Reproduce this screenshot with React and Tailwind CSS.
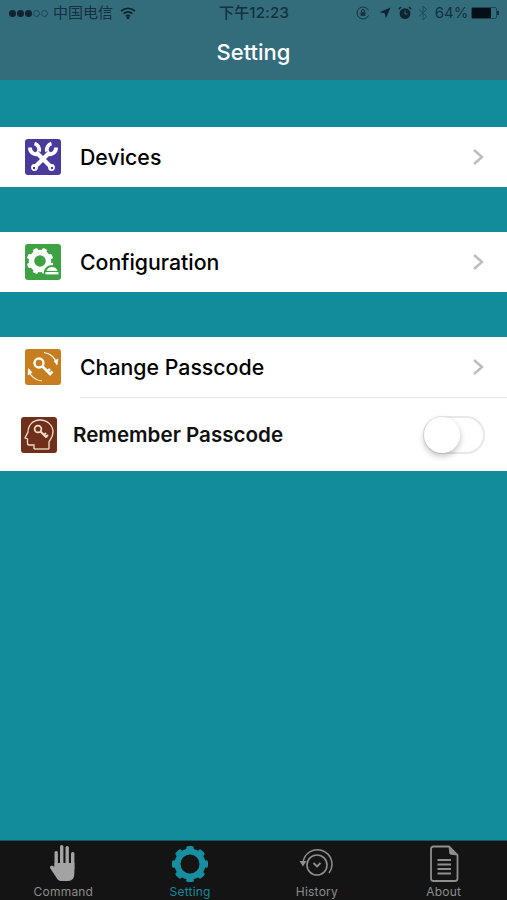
function Gear({ cx, cy, r, sw, toothW, toothL, color, teeth = 8, offset = 22.5 }) {
    const angles = Array.from({ length: teeth }, (_, i) => (i * 360) / teeth + offset)
    return (
        <g>
            <circle cx={cx} cy={cy} r={r} fill="none" stroke={color} strokeWidth={sw} />
            {angles.map((a) => (
                <rect
                    key={a}
                    x={cx - toothW / 2}
                    y={cy - r - sw / 2 - toothL + 0.5}
                    width={toothW}
                    height={toothL + 1}
                    rx={toothW / 4}
                    fill={color}
                    transform={`rotate(${a} ${cx} ${cy})`}
                />
            ))}
        </g>
    )
}

function DevicesIcon() {
    return (
        <div className="w-9 h-9 rounded-[3px] bg-[#4a3a9c] shrink-0">
            <svg viewBox="0 0 36 36" className="w-9 h-9">
                <g stroke="#fff" fill="none">
                    <path d="M11 13 L25 27" strokeWidth="4.2" />
                    <path d="M25 13 L11 27" strokeWidth="4.2" />
                    <path d="M5 8.5 A6.5 6.5 0 0 0 13.5 15" strokeWidth="3.8" />
                    <path d="M9.5 4.5 A6.5 6.5 0 0 1 14 12.5" strokeWidth="3.8" />
                    <path d="M31 8.5 A6.5 6.5 0 0 1 22.5 15" strokeWidth="3.8" />
                    <path d="M26.5 4.5 A6.5 6.5 0 0 0 22 12.5" strokeWidth="3.8" />
                </g>
                <circle cx="9.5" cy="28.5" r="3.4" fill="#fff" />
                <circle cx="26.5" cy="28.5" r="3.4" fill="#fff" />
                <circle cx="9" cy="29" r="1.2" fill="#4a3a9c" />
                <circle cx="27" cy="29" r="1.2" fill="#4a3a9c" />
            </svg>
        </div>
    )
}

function ConfigIcon() {
    return (
        <div className="w-9 h-9 rounded-[3px] bg-[#3da243] shrink-0">
            <svg viewBox="0 0 36 36" className="w-9 h-9">
                <Gear cx={15} cy={17} r={8.5} sw={5.5} toothW={5} toothL={2.5} color="#fff" />
                <path d="M20 30 L20 28 A7.5 7.5 0 0 1 33 25 L33 30 Z" fill="#3da243" stroke="#3da243" strokeWidth="2.5" />
                <path d="M21.5 27 A5.8 5.8 0 0 1 32.5 27 Z" fill="#fff" />
                <rect x="20.5" y="28" width="13" height="2.4" fill="#fff" />
                <circle cx="27" cy="20" r="1.2" fill="#fff" />
            </svg>
        </div>
    )
}

function PasscodeIcon() {
    return (
        <div className="w-9 h-9 rounded-[3px] bg-[#c67e1e] shrink-0">
            <svg viewBox="0 0 36 36" className="w-9 h-9" fill="none" stroke="#fff">
                <circle cx="14" cy="14" r="4.5" strokeWidth="2.4" />
                <path d="M17.5 17.5 L26 26 M22.5 22.5 L25 20 M25 25 L27.5 22.5" strokeWidth="2.6" />
                <path d="M19 3.5 A15 15 0 0 1 32 15" strokeWidth="1.2" />
                <path d="M33 10 L32 16 L29 12 Z" fill="#fff" strokeWidth="0.5" />
                <path d="M17 32 A15 15 0 0 1 3.5 21" strokeWidth="1.2" />
                <path d="M3 26 L3.5 19.5 L7 23.5 Z" fill="#fff" strokeWidth="0.5" />
            </svg>
        </div>
    )
}

function RememberIcon() {
    return (
        <div className="w-9 h-9 rounded-[3px] bg-[#6f2f1b] shrink-0">
            <svg viewBox="0 0 36 36" className="w-9 h-9" fill="none" stroke="#f3dfd0">
                <path d="M13 32 L13 28 L8 28 Q6.5 28 6.5 26 L6.5 22 L4 21 L7 15 C7 8 12 3 19 3 C26 3 32 8 32 15 C32 20 29.5 22 28 25 L28 32" strokeWidth="1.3" />
                <path d="M13 32 L28 32" strokeWidth="1.3" />
                <circle cx="17" cy="12" r="3.4" strokeWidth="1.7" />
                <path d="M19.5 14.5 L25.5 20.5 M23 18 L25 16 M25 20 L27 18" strokeWidth="1.9" />
            </svg>
        </div>
    )
}

function Chevron() {
    return (
        <svg width="12" height="18" viewBox="0 0 12 18" fill="none" className="shrink-0">
            <path d="M2 2 L10 9 L2 16" stroke="#bdbdbf" strokeWidth="2.4" />
        </svg>
    )
}

function Row({ icon, label }) {
    return (
        <div className="h-[60px] flex items-center pl-[25px] pr-[23px]">
            {icon}
            <span className="ml-[19px] pt-[2px] flex-1 text-[21.3px] font-medium text-black">{label}</span>
            <Chevron />
        </div>
    )
}

function StatusBar() {
    return (
        <div className="h-[26px] flex items-center justify-between pl-[9px] pr-[8px] text-[#15303f] text-[15px]">
            <div className="w-[190px] flex items-center">
                <div className="flex items-center gap-[1px]">
                    <span className="w-[7px] h-[7px] rounded-full bg-[#0f2430]" />
                    <span className="w-[7px] h-[7px] rounded-full bg-[#0f2430]" />
                    <span className="w-[7px] h-[7px] rounded-full bg-[#0f2430]" />
                    <span className="w-[7px] h-[7px] rounded-full border border-[#1f4454]" />
                    <span className="w-[7px] h-[7px] rounded-full border border-[#1f4454]" />
                </div>
                <span className="ml-[5px]">中国电信</span>
                <svg width="16" height="12" viewBox="0 0 16 12" fill="none" stroke="#0f2430" strokeWidth="1.7" className="ml-[7px] -mt-[1px]">
                    <path d="M1 4 Q8 -1.5 15 4" />
                    <path d="M3.5 6.7 Q8 3 12.5 6.7" />
                    <path d="M6 9.2 Q8 7.7 10 9.2" />
                    <circle cx="8" cy="10.8" r="0.6" fill="#0f2430" />
                </svg>
            </div>
            <span className="text-[15px] font-medium tracking-[0.2px]">下午12:23</span>
            <div className="w-[190px] flex items-center justify-end">
                <svg width="14" height="14" viewBox="0 0 14 14" fill="none" stroke="#15303f" className="mr-[9px]">
                    <path d="M12.5 9.5 A6 6 0 1 1 12.5 4.5" strokeWidth="1" />
                    <rect x="4.6" y="6.2" width="4.8" height="3.6" fill="#15303f" strokeWidth="0" />
                    <path d="M5.5 6.2 L5.5 5 A1.5 1.5 0 0 1 8.5 5 L8.5 6.2" strokeWidth="1" />
                </svg>
                <svg width="12" height="12" viewBox="0 0 12 12" fill="#0f2430" className="mr-[7px]">
                    <path d="M11.5 0.5 L6.8 11.5 L5.8 6.2 L0.5 5.2 Z" />
                </svg>
                <svg width="14" height="14" viewBox="0 0 14 14" className="mr-[6px]">
                    <circle cx="7" cy="7.6" r="5.4" fill="#0f2430" />
                    <path d="M7 4.5 L7 8 L9.5 8" stroke="#336d7c" fill="none" strokeWidth="1" />
                    <path d="M0.8 3.2 L3 1 M13.2 3.2 L11 1" stroke="#0f2430" strokeWidth="1.5" />
                </svg>
                <svg width="10" height="16" viewBox="0 0 10 16" fill="none" stroke="#1f4a5a" strokeWidth="1" className="mr-[7px]">
                    <path d="M1 4.5 L8.5 11.5 L5 15 L5 1 L8.5 4.5 L1 11.5" />
                </svg>
                <span>64%</span>
                <div className="ml-[3px] w-[26px] h-[12px] border border-[#1f4454] rounded-[2px]">
                    <div className="w-[19px] h-full bg-[#050f16]" />
                </div>
                <span className="w-[1.5px] h-[4px] bg-[#15303f]" />
            </div>
        </div>
    )
}

function Tab({ icon, label, active }) {
    return (
        <div className="w-[126.75px] h-full flex flex-col items-center">
            <div className="h-[45px] flex items-center justify-center">{icon}</div>
            <span className={`text-[12px] leading-none tracking-[0.2px] ${active ? 'text-[#128c9b]' : 'text-[#8c8c8c]'}`}>
                {label}
            </span>
        </div>
    )
}

function TabBar() {
    return (
        <div className="h-[60px] bg-[#141414] border-t border-[#0f5a60] flex">
            <Tab
                label="Command"
                icon={
                    <svg width="28" height="38" viewBox="0 0 28 38" fill="#a3a3a3" className="-mt-[1px]">
                        <rect x="5.5" y="7" width="3.4" height="18" rx="1.6" />
                        <rect x="11" y="1" width="3.4" height="21" rx="1.6" />
                        <rect x="16.5" y="2" width="3.4" height="21" rx="1.6" />
                        <rect x="22" y="8" width="3.4" height="18" rx="1.6" />
                        <path d="M5.5 19 L25.4 19 L25.4 29 Q25.4 37 19 37 L12 37 Q9 37 7 33 L1 24 Q0.5 22 2.5 21.5 Q4 21.5 5.5 23 Z" />
                    </svg>
                }
            />
            <Tab
                active
                label="Setting"
                icon={
                    <svg width="38" height="38" viewBox="0 0 38 38">
                        <Gear cx={19} cy={19} r={12.5} sw={6} toothW={7.5} toothL={3} color="#178fa0" offset={0} />
                    </svg>
                }
            />
            <Tab
                label="History"
                icon={
                    <svg width="38" height="32" viewBox="0 0 38 32" fill="none" stroke="#8f8f8f" className="mt-[1px]">
                        <path d="M5 15 A14.5 14.5 0 1 1 31 25" strokeWidth="1.5" />
                        <path d="M1.5 13 L8.5 13 L5 18.5 Z" fill="#8f8f8f" strokeWidth="0" />
                        <circle cx="19" cy="17" r="10" strokeWidth="1.6" />
                        <path d="M15.5 15 L19 18.5 L22.5 15" strokeWidth="1.8" />
                    </svg>
                }
            />
            <Tab
                label="About"
                icon={
                    <svg width="30" height="38" viewBox="0 0 30 38" fill="none" stroke="#8f8f8f" strokeWidth="1.8">
                        <path d="M4.5 1.5 L20 1.5 L28.5 10 L28.5 33.5 Q28.5 36 26 36 L4.5 36 Q2 36 2 33.5 L2 4 Q2 1.5 4.5 1.5 Z" />
                        <path d="M20 1.5 L21 9 L28.5 10" fill="#8f8f8f" strokeWidth="1" />
                        <path d="M8.5 15 H22 M8.5 19.5 H22 M8.5 24 H22 M8.5 28.5 H22" strokeWidth="1.8" />
                    </svg>
                }
            />
        </div>
    )
}

export default function App() {
    return (
        <div className="w-[507px] h-[900px] flex flex-col bg-[#128c9b] overflow-hidden font-['Inter','Noto_Sans_CJK_SC',sans-serif]">
            <div className="h-[80px] bg-[#336d7c]">
                <StatusBar />
                <h1 className="mt-[10px] text-center text-white text-[22px] leading-[32px] font-medium">Setting</h1>
            </div>

            <div className="flex-1 pt-[47px]">
                <div className="bg-white">
                    <Row icon={<DevicesIcon />} label="Devices" />
                </div>
                <div className="mt-[45px] bg-white">
                    <Row icon={<ConfigIcon />} label="Configuration" />
                </div>
                <div className="mt-[45px] bg-white">
                    <Row icon={<PasscodeIcon />} label="Change Passcode" />
                    <div className="ml-[80px] h-px bg-[#e6e6e6]" />
                    <div className="h-[73px] flex items-center pl-[21px] pr-[22px]">
                        <RememberIcon />
                        <span className="ml-[16px] pt-[2px] flex-1 text-[20.6px] font-semibold text-[#111]">Remember Passcode</span>
                        <div className="relative w-[62px] h-[38px] rounded-full border-2 border-[#e8e8e8] bg-white">
                            <div className="absolute -left-[1px] -top-[1px] w-[36px] h-[36px] rounded-full bg-white shadow-[0_3px_6px_rgba(0,0,0,0.25)]" />
                        </div>
                    </div>
                </div>
            </div>

            <TabBar />
        </div>
    )
}
